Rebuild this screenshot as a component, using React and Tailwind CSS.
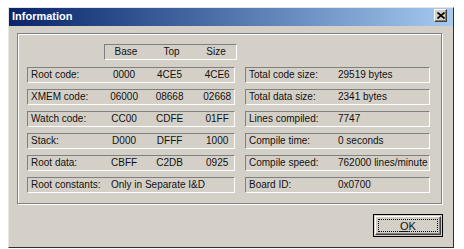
import React from "react";

// Win2000-style "Information" dialog
const sunken = "border-t border-l border-t-[#808080] border-l-[#808080] border-b border-r border-b-white border-r-white";

const memRows = [
  ["Root code:", "0000", "4CE5", "4CE6"],
  ["XMEM code:", "06000", "08668", "02668"],
  ["Watch code:", "CC00", "CDFE", "01FF"],
  ["Stack:", "D000", "DFFF", "1000"],
  ["Root data:", "CBFF", "C2DB", "0925"],
];

const stats = [
  ["Total code size:", "29519 bytes"],
  ["Total data size:", "2341 bytes"],
  ["Lines compiled:", "7747"],
  ["Compile time:", "0 seconds"],
  ["Compile speed:", "762000 lines/minute"],
  ["Board ID:", "0x0700"],
];

function CloseButton() {
  return (
    <div className="mt-[1px] mr-[6px] flex h-[13px] w-[13px] items-center justify-center bg-[#d4d0c8] border border-t-white border-l-white border-r-[#404040] border-b-[#404040] shadow-[inset_-1px_-1px_0_#808080]">
      <svg width="8" height="7" viewBox="0 0 8 7">
        <path d="M0.5 0.5 L7.5 6.5 M7.5 0.5 L0.5 6.5" stroke="#000" strokeWidth="1.6" />
      </svg>
    </div>
  );
}

export default function App() {
  return (
    <div className="w-[464px] h-[249px] bg-white pt-[7px] pl-[8px] text-[10px] leading-[12px] text-[#111] whitespace-nowrap" style={{ fontFamily: '"Liberation Sans", Arial, sans-serif' }}>
      <div className="w-[446px] h-[241px] bg-[#d4d0c8] border border-t-[#e8e6e0] border-l-[#e8e6e0] border-r-[#303030] border-b-[#303030] flex flex-col">
        {/* Title bar */}
        <div className="h-[18px] flex items-start justify-between bg-gradient-to-r from-[#0a246a] to-[#a6caf0]">
          <span className="pl-[3px] pt-[2px] font-bold text-white text-[11px] leading-[13px]">Information</span>
          <CloseButton />
        </div>

        {/* Body */}
        <div className="pt-[7px] pl-[8px] flex flex-col">
          {/* Group box */}
          <div className="w-[425px] h-[171px] border border-[#808080] shadow-[inset_1px_1px_0_#fff,1px_1px_0_#fff] pt-[10px] pl-[9px] flex flex-col gap-[6px]">
            {/* Header */}
            <div className="flex mb-[1px]">
              <div className={"ml-[77px] w-[133px] h-[16px] flex items-center " + sunken}>
                <span className="w-[42px] text-center">Base</span>
                <span className="w-[49px] text-center">Top</span>
                <span className="w-[40px] text-center">Size</span>
              </div>
            </div>

            {memRows.map((r, i) => (
              <div key={r[0]} className="flex gap-[10px]">
                <div className={"w-[208px] h-[16px] flex items-center pl-[3px] " + sunken}>
                  <span className="w-[71px]">{r[0]}</span>
                  <span className="w-[46px] text-center">{r[1]}</span>
                  <span className="w-[46px] text-center">{r[2]}</span>
                  <span className="w-[42px] pl-[8px] text-center">{r[3]}</span>
                </div>
                <div className={"w-[185px] h-[16px] flex items-center pl-[3px] " + sunken}>
                  <span className="w-[89px]">{stats[i][0]}</span>
                  <span>{stats[i][1]}</span>
                </div>
              </div>
            ))}

            <div className="flex gap-[10px]">
              <div className={"w-[208px] h-[16px] flex items-center pl-[3px] " + sunken}>
                <span className="w-[80px]">Root constants:</span>
                <span>Only in Separate I&amp;D</span>
              </div>
              <div className={"w-[185px] h-[16px] flex items-center pl-[3px] " + sunken}>
                <span className="w-[89px]">{stats[5][0]}</span>
                <span>{stats[5][1]}</span>
              </div>
            </div>
          </div>

          {/* OK button */}
          <div className="mt-[10px] pl-[356px]">
            <div className="w-[70px] h-[23px] border border-black bg-[#d4d0c8] p-[1px]">
              <div className="w-full h-full border border-t-white border-l-white border-r-[#404040] border-b-[#404040] shadow-[inset_-1px_-1px_0_#808080] p-[2px]">
                <div className="w-full h-full border border-dotted border-black flex items-center justify-center text-[11px]">
                  <span><span className="underline">O</span>K</span>
                </div>
              </div>
            </div>
          </div>
        </div>
      </div>
    </div>
  );
}
